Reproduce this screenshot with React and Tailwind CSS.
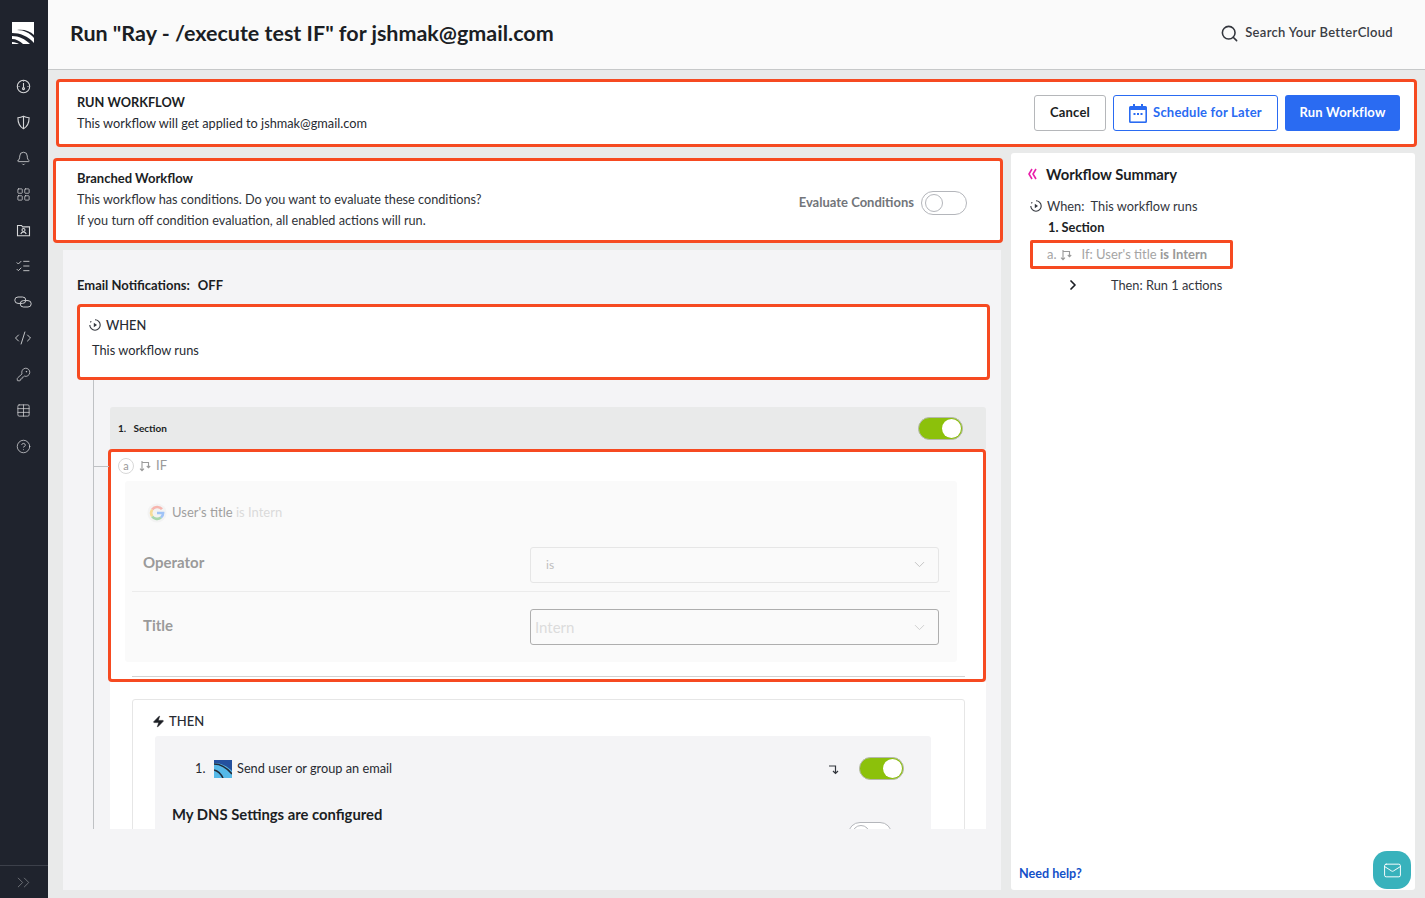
import { Search, Bell, ChevronDown, ChevronRight, ChevronsRight, Zap, LayoutGrid, CodeXml, KeyRound, Table, CircleHelp, ListChecks, Mail } from 'lucide-react'

function GaugeIcon() {
  return (
    <svg width="15" height="15" viewBox="0 0 15 15" fill="none" stroke="#d5d6d8" strokeWidth="1.1">
      <circle cx="7.5" cy="7.5" r="6.2" />
      <path d="M7.5 4v4.5M2.5 7.5h1M11.5 7.5h1M7.5 1.5v1" />
      <circle cx="7.5" cy="9.6" r="1" />
    </svg>
  )
}

function ShieldIcon() {
  return (
    <svg width="15" height="15" viewBox="0 0 15 15" fill="none" stroke="#d5d6d8" strokeWidth="1.1">
      <path d="M7.5 1.2c2 1 3.8 1.4 5.6 1.5 0 4.6-1.2 8.6-5.6 11-4.4-2.4-5.6-6.4-5.6-11 1.8-.1 3.6-.5 5.6-1.5z" />
      <path d="M7.5 1.5v12" />
    </svg>
  )
}

function FolderIcon() {
  return (
    <svg width="15" height="15" viewBox="0 0 15 15" fill="none" stroke="#d5d6d8" strokeWidth="1.1">
      <path d="M1.5 2.5h4l1.2 1.4h6.8v8.8h-12z" />
      <circle cx="7.5" cy="7" r="1.5" />
      <path d="M4.8 11c.4-1.4 1.4-2 2.7-2s2.3.6 2.7 2" />
    </svg>
  )
}

function ChainIcon() {
  return (
    <svg width="18" height="14" viewBox="0 0 18 14" fill="none" stroke="#c9cacd" strokeWidth="1">
      <rect x="0.8" y="2" width="11" height="6.4" rx="3.2" />
      <rect x="6.2" y="5.6" width="11" height="6.4" rx="3.2" />
    </svg>
  )
}

function Logo() {
  return (
    <svg width="22" height="22" viewBox="0 0 22 22">
      <rect width="22" height="22" fill="#ffffff" />
      <path d="M0 11c8 0 16 3 22 10v1h-4C13 17 7 14 0 14z" fill="#1f232d" />
      <path d="M0 17c4 0 8 2 11 5H7c-2-1-4-2-7-2z" fill="#1f232d" />
      <path d="M5 8c7 0 13 3 17 8v-3C18 9 12 7 5 8z" fill="#1f232d" />
    </svg>
  )
}

function PlayCircle({ color = '#33363d' }) {
  return (
    <svg width="12" height="12" viewBox="0 0 12 12" fill="none" stroke={color} strokeWidth="1.1">
      <path d="M6 .8A5.2 5.2 0 1 1 .8 6" />
      <path d="M2.2 2.2 1.4 3.4" />
      <path d="M4.8 3.8 8 6 4.8 8.2z" fill={color} stroke="none" />
    </svg>
  )
}

function BranchIcon({ color = '#9a9a9a' }) {
  return (
    <svg width="12" height="12" viewBox="0 0 12 12" fill="none" stroke={color} strokeWidth="1.1">
      <path d="M3 1v9.5M1 8.6l2 2 2-2" />
      <path d="M3 2.5h6.5v5M7.8 6l1.7 1.8L11.2 6" />
    </svg>
  )
}

function CalendarIcon() {
  return (
    <svg width="18" height="19" viewBox="0 0 18 19">
      <path d="M4 0h2v2h6V0h2v2h2.5A1.5 1.5 0 0 1 18 3.5v14a1.5 1.5 0 0 1-1.5 1.5h-15A1.5 1.5 0 0 1 0 17.5v-14A1.5 1.5 0 0 1 1.5 2H4z" fill="#2a6bf2" />
      <rect x="1.6" y="6" width="14.8" height="11.4" fill="#ffffff" />
      <rect x="4.5" y="9" width="2" height="2" fill="#2a6bf2" />
      <rect x="8" y="9" width="2" height="2" fill="#2a6bf2" />
      <rect x="11.5" y="9" width="2" height="2" fill="#2a6bf2" />
    </svg>
  )
}

function CollapseIcon() {
  return (
    <svg width="9" height="12" viewBox="0 0 9 12" fill="none" stroke="#e91eaa" strokeWidth="1.6">
      <path d="M4 1 1 6l3 5M8 1 5 6l3 5" />
    </svg>
  )
}

function GoogleIcon() {
  return (
    <svg width="20" height="20" viewBox="0 0 20 20" fill="none" strokeWidth="2.6">
      <circle cx="10" cy="10" r="9.6" fill="#f3f3f3" />
      <path d="M15 6.2A6.2 6.2 0 0 0 5.2 6.6" stroke="#f6b5ae" />
      <path d="M5.2 6.6a6.2 6.2 0 0 0 0 6.8" stroke="#f7dc9a" />
      <path d="M5.2 13.4a6.2 6.2 0 0 0 8.8 1.2" stroke="#a9d7ad" />
      <path d="M14 14.6c1.4-1.1 2.1-2.7 2.1-4.6H10" stroke="#9fc3f7" />
    </svg>
  )
}

function ActionLogo() {
  return (
    <svg width="18" height="18" viewBox="0 0 18 18">
      <rect width="18" height="18" fill="#56b9e8" />
      <path d="M0 0h18v11C13 6 7 3 0 3z" fill="#24509e" />
      <path d="M0 4c7 0 13 4 18 10" stroke="#222a38" strokeWidth="1.5" fill="none" />
      <path d="M0 10c4 1 7 4 9 8" stroke="#222a38" strokeWidth="1.5" fill="none" />
    </svg>
  )
}

function Toggle({ on, small }) {
  if (on) {
    return (
      <div className="flex h-[23px] w-[45px] items-center justify-end rounded-full border border-[#b5b8ad] bg-[#8cc10b] pr-px">
        <div className="h-[19px] w-[19px] rounded-full bg-white" />
      </div>
    )
  }
  return (
    <div className={`flex h-[24px] shrink-0 items-center rounded-full border border-[#b4b6bb] bg-white pl-[3px] ${small ? 'w-[44px]' : 'w-[46px]'}`}>
      <div className="h-[18px] w-[18px] rounded-full border border-[#b4b6bb] bg-white" />
    </div>
  )
}

const NAV_ICONS = [
  <GaugeIcon />,
  <ShieldIcon />,
  <Bell size={15} strokeWidth={1.3} color="#d5d6d8" />,
  <LayoutGrid size={15} strokeWidth={1.2} color="#d5d6d8" />,
  <FolderIcon />,
  <ListChecks size={16} strokeWidth={1.3} color="#d5d6d8" />,
  <ChainIcon />,
  <CodeXml size={18} strokeWidth={1.2} color="#d5d6d8" />,
  <KeyRound size={15} strokeWidth={1.2} color="#d5d6d8" />,
  <Table size={15} strokeWidth={1.2} color="#d5d6d8" />,
  <CircleHelp size={15} strokeWidth={1.2} color="#d5d6d8" />,
]

function Sidebar() {
  return (
    <aside className="flex h-[898px] w-[48px] shrink-0 flex-col items-center bg-[#1f232d]">
      <div className="mt-[22px] -ml-[3px]"><Logo /></div>
      <nav className="mt-[24px] -ml-[2px] flex flex-col items-center">
        {NAV_ICONS.map((icon, i) => (
          <div key={i} className="flex h-[36px] w-[48px] items-center justify-center">{icon}</div>
        ))}
      </nav>
      <div className="mt-auto flex h-[33px] w-full items-center justify-center border-t border-[#3c404a] pr-[2px]">
        <ChevronsRight size={21} strokeWidth={1} color="#777a80" />
      </div>
    </aside>
  )
}

function Header() {
  return (
    <header className="flex h-[70px] items-center justify-between border-b border-[#c6c8c9] bg-[#fafafa] pr-[32px] pb-[3px] pl-[22px]">
      <h1 className="text-[21.5px] font-bold text-[#1b1e24]">Run "Ray - /execute test IF" for jshmak@gmail.com</h1>
      <div className="flex items-center gap-[6px] text-[13px] font-semibold tracking-[0.3px] text-[#3a3d44]">
        <Search size={19} strokeWidth={2} color="#33363d" />
        Search Your BetterCloud
      </div>
    </header>
  )
}

function RunBar() {
  return (
    <section className="mx-[8px] mt-[9px] flex h-[68px] items-center justify-between rounded-[4px] border-[3px] border-[#f64a21] bg-white pr-[14px] pl-[18px]">
      <div className="text-[12.75px] leading-[21px] text-[#272a31]">
        <div className="font-bold text-[#1b1e24]">RUN WORKFLOW</div>
        <div>This workflow will get applied to jshmak@gmail.com</div>
      </div>
      <div className="flex items-center gap-[7px] text-[13px] font-bold tracking-[0.2px]">
        <div className="flex h-[36px] w-[72px] items-center justify-center rounded-[3px] border border-[#b5b7ba] text-[#1b1e24]">Cancel</div>
        <div className="flex h-[36px] w-[165px] items-center justify-center gap-[6px] rounded-[3px] border border-[#2a6bf2] text-[#2a6bf2]">
          <CalendarIcon />
          Schedule for Later
        </div>
        <div className="flex h-[36px] w-[115px] items-center justify-center rounded-[3px] bg-[#2a6bf2] text-white">Run Workflow</div>
      </div>
    </section>
  )
}

function BranchedBox() {
  return (
    <section className="mt-[5px] flex h-[85px] w-[950px] items-center justify-between rounded-[4px] border-[3px] border-[#f64a21] bg-white pr-[33px] pl-[21px]">
      <div className="pb-[3px] text-[12.7px] leading-[21px] text-[#2f3238]">
        <div className="text-[13px] font-bold text-[#1b1e24]">Branched Workflow</div>
        <div>This workflow has conditions. Do you want to evaluate these conditions?</div>
        <div>If you turn off condition evaluation, all enabled actions will run.</div>
      </div>
      <div className="mt-[5px] flex items-center gap-[7px] text-[13px] font-bold text-[#72757a]">
        Evaluate Conditions
        <Toggle />
      </div>
    </section>
  )
}

function IfBlock() {
  return (
    <div className="-ml-[2px] h-[233px] rounded-[4px] border-[3px] border-[#f64a21] bg-white">
      <div className="flex items-center pt-[4px] pl-[7px] text-[13px] text-[#9a9a9a]">
        <span className="flex h-[16px] w-[16px] items-center justify-center rounded-full border border-[#d8d8d8] text-[11px]">a</span>
        <span className="ml-[5px]"><BranchIcon /></span>
        <span className="ml-[5px]">IF</span>
      </div>
      <div className="mt-[5px] ml-[14px] h-[181px] w-[832px] rounded-[3px] bg-[#fafafa] px-[7px]">
        <div className="flex h-[61px] items-center pt-[4px] pl-[15px] text-[13px] text-[#9f9f9f]">
          <GoogleIcon />
          <span className="ml-[5px]">User's title <span className="text-[#dadada]">is Intern</span></span>
        </div>
        <div className="flex h-[50px] items-center border-b border-[#ececec] pb-[3px]">
          <span className="ml-[11px] w-[387px] pb-[4px] text-[15px] font-bold text-[#9a9a9a]">Operator</span>
          <div className="flex h-[36px] w-[409px] items-center justify-between rounded-[3px] border border-[#e6e6e6] pr-[10px] pl-[15px] text-[12px] text-[#bdbdbd]">
            is
            <ChevronDown size={17} strokeWidth={1.4} color="#c4c4c4" />
          </div>
        </div>
        <div className="flex h-[62px] items-center pt-[9px]">
          <span className="ml-[11px] w-[387px] pb-[4px] text-[15px] font-bold text-[#9a9a9a]">Title</span>
          <div className="flex h-[36px] w-[409px] items-center justify-between rounded-[3px] border border-[#aeaeae] pr-[10px] pl-[4px] text-[15px] text-[#dcdcdc]">
            Intern
            <ChevronDown size={17} strokeWidth={1.4} color="#cfcfcf" />
          </div>
        </div>
      </div>
      <div className="mt-[14px] ml-[21px] h-px w-[833px] bg-[#d2d2d2]" />
    </div>
  )
}

function ThenBlock() {
  return (
    <div className="bg-white px-[22px] pt-[17px] pb-[200px]">
      <div className="w-[833px] rounded-[3px] border border-[#e6e6e6] pr-[33px] pl-[22px]">
        <div className="-ml-[3px] flex h-[36px] items-center gap-[4px] pt-[7px] text-[13px] font-medium text-[#272a31]">
          <Zap size={13} strokeWidth={1} fill="#1b1e24" color="#1b1e24" />
          THEN
        </div>
        <div className="h-[160px] rounded-[3px] bg-[#f4f4f6] pt-[21px]">
          <div className="flex h-[23px] items-center pr-[27px] pl-[40px] text-[12.75px] text-[#272a31]">
            <span className="w-[19px]">1.</span>
            <ActionLogo />
            <span className="ml-[5px]">Send user or group an email</span>
            <svg className="mr-[19px] ml-auto" width="12" height="12" viewBox="0 0 12 12" fill="none" stroke="#33363d" strokeWidth="1.2">
              <path d="M1 3h6.5v7M5 8l2.5 2.5L10 8" />
            </svg>
            <Toggle on />
          </div>
          <div className="flex items-start justify-between pt-[25px] pr-[39px] pl-[17px]">
            <span className="text-[14.8px] leading-[18px] font-bold text-[#1b1e24]">My DNS Settings are configured</span>
            <div className="mt-[17px]"><Toggle small /></div>
          </div>
        </div>
      </div>
    </div>
  )
}

function Conditions() {
  return (
    <section className="mt-[7px] flex-1 bg-[#f4f4f6]">
      <div className="h-[579px] overflow-hidden pr-[15px] pl-[14px]">
        <div className="flex h-[54px] items-end gap-[8px] pb-[9px] text-[13px] font-bold text-[#1b1e24]">
          <span>Email Notifications:</span>
          <span>OFF</span>
        </div>
        <div className="mr-[-4px] h-[76px] rounded-[4px] border-[3px] border-[#f64a21] bg-white pl-[9px] text-[12.8px] text-[#272a31]">
          <div className="flex items-center gap-[5px] pt-[9px] leading-[18px] font-medium">
            <PlayCircle />
            WHEN
          </div>
          <div className="mt-[7px] pl-[3px]">This workflow runs</div>
        </div>
        <div className="relative ml-[16px] border-l border-[#bfc1c4] pt-[27px] pl-[16px]">
          <div className="absolute top-[86px] left-0 h-px w-[15px] bg-[#bfc1c4]" />
          <div className="flex h-[42px] items-center justify-between rounded-t-[3px] bg-[#e9eaea] pr-[23px] pl-[8px] text-[10px] font-bold text-[#1b1e24]">
            <span>1.&nbsp;&nbsp;&nbsp;Section</span>
            <Toggle on />
          </div>
          <IfBlock />
          <ThenBlock />
        </div>
      </div>
    </section>
  )
}

function Summary() {
  return (
    <aside className="relative mt-[6px] ml-[10px] flex w-[404px] shrink-0 flex-col rounded-[3px] bg-white text-[12.8px] text-[#33363d]">
      <div className="mt-[12px] flex items-center pl-[17px] text-[14.8px] leading-[18px] font-bold text-[#1b1e24]">
        <CollapseIcon />
        <span className="ml-[9px]">Workflow Summary</span>
      </div>
      <div className="mt-[14px] flex items-center gap-[5px] pl-[19px] leading-[18px]">
        <PlayCircle />
        When:&nbsp; This workflow runs
      </div>
      <div className="mt-[3px] pl-[37px] leading-[18px] font-bold text-[#1b1e24]">1. Section</div>
      <div className="mt-[4px] ml-[19px] flex h-[29px] w-[203px] items-center rounded-[2px] border-[3px] border-[#f64a21] pl-[14px] text-[13px] text-[#a5a5a5]">
        a.
        <span className="ml-[3px]"><BranchIcon /></span>
        <span className="ml-[10px]">If: User's title <span className="font-bold text-[#999999]">is Intern</span></span>
      </div>
      <div className="mt-[7px] flex items-center leading-[18px]">
        <span className="ml-[54px]"><ChevronRight size={16} strokeWidth={2.6} color="#1b1e24" /></span>
        <span className="ml-[30px]">Then: Run 1 actions</span>
      </div>
      <div className="mt-auto mb-[6px] pl-[8px]">
        <span className="text-[12.6px] font-bold text-[#1450c8]">Need help?</span>
        <div className="absolute right-[4px] bottom-px flex h-[38px] w-[38px] items-center justify-center rounded-[14px] bg-[#38b2bc]">
          <Mail size={19} strokeWidth={1.2} color="#ffffff" />
        </div>
      </div>
    </aside>
  )
}

export default function App() {
  return (
    <div className="flex h-[898px] w-[1425px] overflow-hidden bg-[#e9eaea] font-[Lato,sans-serif]">
      <Sidebar />
      <main className="flex min-w-0 flex-1 flex-col">
        <Header />
        <RunBar />
        <div className="flex flex-1 pb-[8px]">
          <div className="mt-[6px] flex w-[953px] flex-col pl-[5px]">
            <BranchedBox />
            <div className="flex flex-1 pl-[10px]">
              <div className="flex w-[938px] flex-col">
                <Conditions />
              </div>
            </div>
          </div>
          <Summary />
        </div>
      </main>
    </div>
  )
}
